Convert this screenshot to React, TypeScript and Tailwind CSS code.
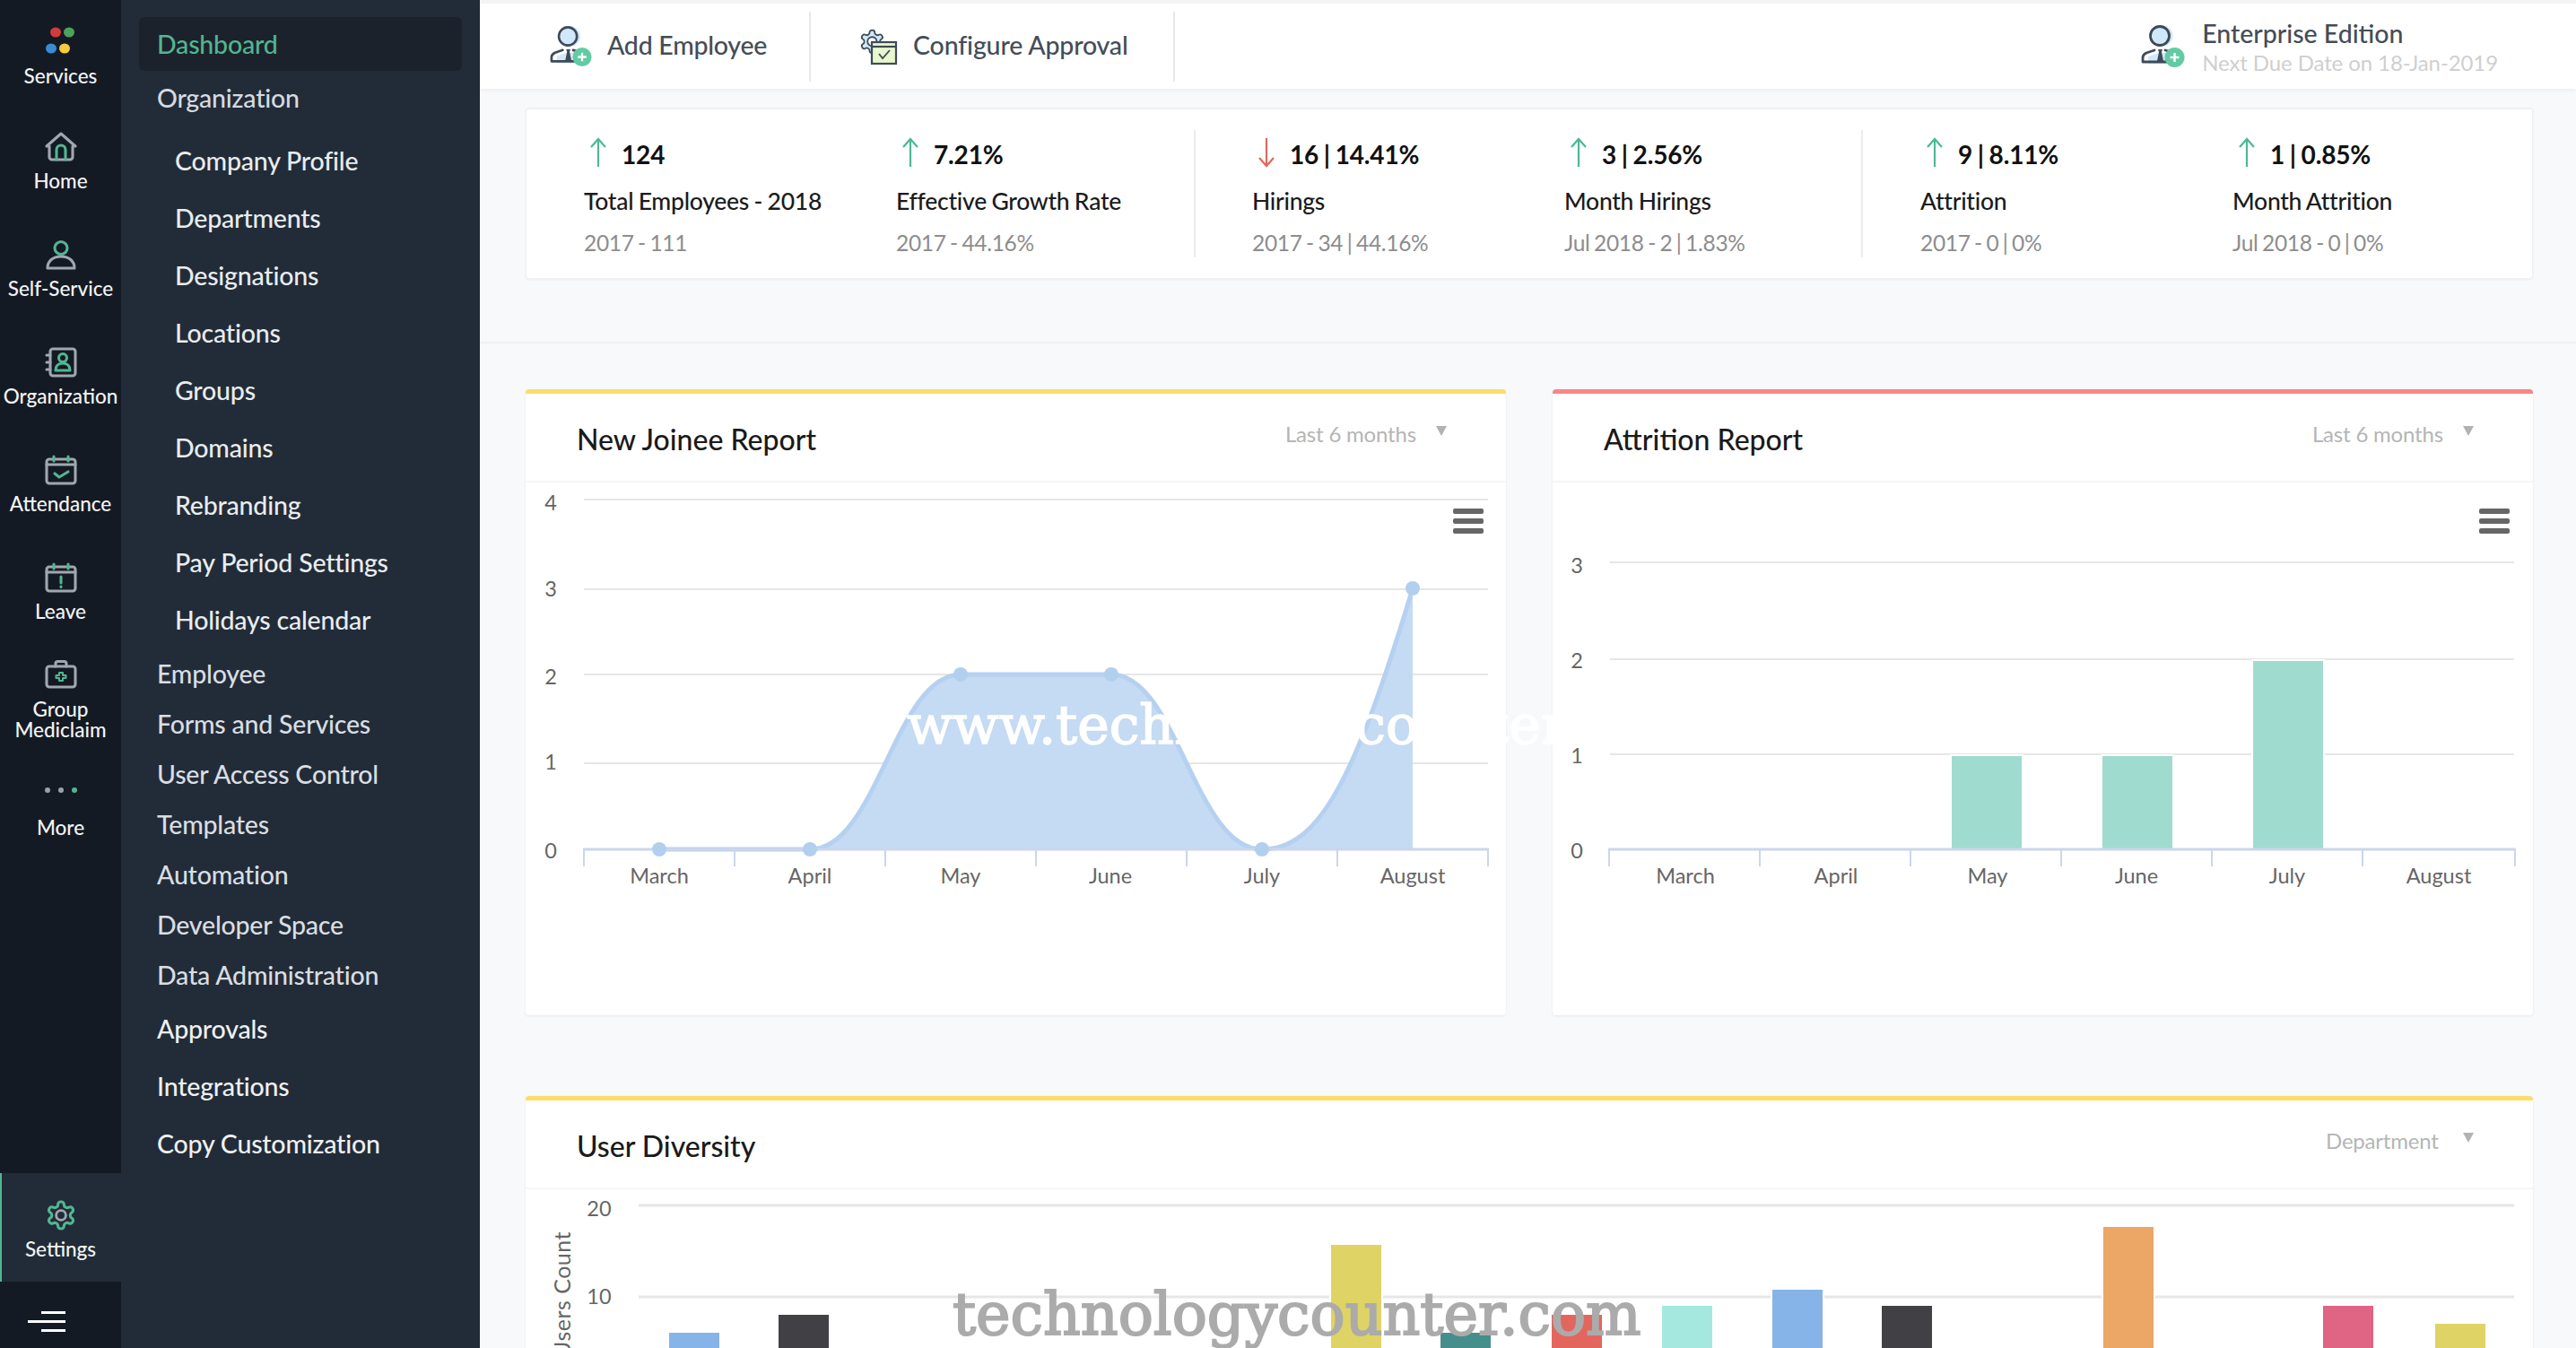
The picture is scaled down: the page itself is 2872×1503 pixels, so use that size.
import React from "react";

const G = "#52b592";
const S = "#a0a7af";

const Gear = "M12.22 2h-.44a2 2 0 0 0-2 2v.18a2 2 0 0 1-1 1.73l-.43.25a2 2 0 0 1-2 0l-.15-.08a2 2 0 0 0-2.73.73l-.22.38a2 2 0 0 0 .73 2.73l.15.1a2 2 0 0 1 1 1.72v.51a2 2 0 0 1-1 1.74l-.15.09a2 2 0 0 0-.73 2.73l.22.38a2 2 0 0 0 2.73.73l.15-.08a2 2 0 0 1 2 0l.43.25a2 2 0 0 1 1 1.73V20a2 2 0 0 0 2 2h.44a2 2 0 0 0 2-2v-.18a2 2 0 0 1 1-1.73l.43-.25a2 2 0 0 1 2 0l.15.08a2 2 0 0 0 2.73-.73l.22-.39a2 2 0 0 0-.73-2.73l-.15-.08a2 2 0 0 1-1-1.74v-.5a2 2 0 0 1 1-1.74l.15-.09a2 2 0 0 0 .73-2.73l-.22-.38a2 2 0 0 0-2.73-.73l-.15.08a2 2 0 0 1-2 0l-.43-.25a2 2 0 0 1-1-1.73V4a2 2 0 0 0-2-2z";

function Ico({ children }: { children: React.ReactNode }) {
  return (
    <svg width="36" height="36" viewBox="0 0 36 36" fill="none" strokeWidth="3.1" strokeLinecap="round" strokeLinejoin="round">
      {children}
    </svg>
  );
}

const railIcons: Record<string, React.ReactNode> = {
  Services: (
    <svg width="36" height="32" viewBox="0 0 36 32">
      <ellipse cx="12" cy="7" rx="6" ry="5.5" fill="#d33a3a" />
      <ellipse cx="27" cy="7" rx="6" ry="5.5" fill="#4ba35a" />
      <ellipse cx="7" cy="25" rx="6" ry="5.5" fill="#3a8ad6" />
      <ellipse cx="22" cy="25" rx="6" ry="5.5" fill="#f4cc3c" />
    </svg>
  ),
  Home: (
    <Ico>
      <path d="M2 17 18 3l16 14h-3v12a3 3 0 0 1-3 3H8a3 3 0 0 1-3-3V17z" stroke={S} />
      <path d="M13 32V21a5 5 0 0 1 10 0v11" stroke={G} />
    </Ico>
  ),
  "Self-Service": (
    <Ico>
      <circle cx="18" cy="10.5" r="7" stroke={G} />
      <path d="M3 33c0-8 6-13 15-13s15 5 15 13z" stroke={S} />
    </Ico>
  ),
  Organization: (
    <Ico>
      <rect x="6" y="3" width="28" height="30" rx="3" stroke={S} />
      <path d="M2 10h4M2 18h4M2 26h4" stroke={S} />
      <circle cx="20" cy="13" r="4.5" stroke={G} />
      <path d="M12 27c0-5 3-8 8-8s8 3 8 8z" stroke={G} />
    </Ico>
  ),
  Attendance: (
    <Ico>
      <rect x="2" y="6" width="32" height="27" rx="3" stroke={S} />
      <path d="M2 12h32" stroke={S} />
      <path d="M10 3v5M26 3v5" stroke={G} />
      <path d="M11 22l5 4 10-6" stroke={G} />
    </Ico>
  ),
  Leave: (
    <Ico>
      <rect x="2" y="6" width="32" height="27" rx="3" stroke={S} />
      <path d="M2 12h32" stroke={S} />
      <path d="M10 3v5M26 3v5" stroke={G} />
      <path d="M18 17v7M18 28v.5" stroke={G} />
    </Ico>
  ),
  Group: (
    <Ico>
      <rect x="2" y="9" width="32" height="23" rx="3" stroke={S} />
      <path d="M12 9V6a2.5 2.5 0 0 1 2.5-2.5h7A2.5 2.5 0 0 1 24 6v3" stroke={S} />
      <path d="M16 16h4v3h3.5v3H20v3h-4v-3h-3.5v-3H16z" stroke={G} strokeWidth="2" />
    </Ico>
  ),
};

function RailItem({ label, ic }: { label: string; ic: React.ReactNode }) {
  return (
    <div className="h-[120px] flex flex-col items-center pt-[21px]">
      <div className="h-[36px] flex items-center justify-center">{ic}</div>
      <div className="mt-[6px] leading-[28px] text-[22.5px] font-medium text-[#f2f4f6] whitespace-nowrap">{label}</div>
    </div>
  );
}

function Rail() {
  return (
    <div className="w-[135px] shrink-0 h-full bg-[#141a24] flex flex-col">
      <div className="h-[125px] flex flex-col items-center pt-[29px]">
        {railIcons.Services}
        <div className="mt-[10px] leading-[28px] text-[22.5px] font-medium text-[#f2f4f6]">Services</div>
      </div>
      <RailItem label="Home" ic={railIcons.Home} />
      <RailItem label="Self-Service" ic={railIcons["Self-Service"]} />
      <RailItem label="Organization" ic={railIcons.Organization} />
      <RailItem label="Attendance" ic={railIcons.Attendance} />
      <RailItem label="Leave" ic={railIcons.Leave} />
      <div className="h-[120px] flex flex-col items-center pt-[9px]">
        {railIcons.Group}
        <div className="mt-[9px] text-center leading-[23px] text-[22.5px] font-medium text-[#f2f4f6]">
          Group
          <br />
          Mediclaim
        </div>
      </div>
      <div className="h-[120px] flex flex-col items-center pt-[33px]">
        <div className="flex gap-[9px]">
          <span className="w-[6px] h-[6px] rounded-full bg-[#9aa1a9]" />
          <span className="w-[6px] h-[6px] rounded-full bg-[#9aa1a9]" />
          <span className="w-[6px] h-[6px] rounded-full bg-[#52b592]" />
        </div>
        <div className="mt-[25px] leading-[28px] text-[22.5px] font-medium text-[#f2f4f6]">More</div>
      </div>
      <div className="mt-auto h-[121px] bg-[#222c38] border-l-[2px] border-[#52b592] flex flex-col items-center pt-[29px] pr-[2px]">
        <svg width="36" height="36" viewBox="0 0 24 24" fill="none" strokeLinecap="round" strokeLinejoin="round">
          <path d={Gear} stroke={G} strokeWidth="2.1" />
          <circle cx="12" cy="12" r="3.6" stroke={S} strokeWidth="1.9" />
        </svg>
        <div className="mt-[6px] leading-[28px] text-[22.5px] font-medium text-[#f2f4f6]">Settings</div>
      </div>
      <div className="h-[74px] pl-[31px] pt-[33px] flex flex-col items-end w-[73px] gap-[7px]">
        <span className="block w-[27px] h-[3px] bg-white" />
        <span className="block w-[42px] h-[3px] bg-white" />
        <span className="block w-[27px] h-[3px] bg-white" />
      </div>
    </div>
  );
}

function Side() {
  const sub = ["Company Profile", "Departments", "Designations", "Locations", "Groups", "Domains", "Rebranding", "Pay Period Settings", "Holidays calendar"];
  const a = ["Employee", "Forms and Services", "User Access Control", "Templates", "Automation", "Developer Space", "Data Administration"];
  const b = ["Approvals", "Integrations", "Copy Customization"];
  return (
    <div className="w-[400px] shrink-0 h-full bg-[#222c38] text-[28.5px] font-medium tracking-[-0.2px] pt-[19px]">
      <div className="mx-[20px] h-[60px] rounded-[6px] bg-[#1b222c] pl-[20px] flex items-center text-[#52b592]">Dashboard</div>
      <div className="h-[60px] pl-[40px] flex items-center text-[#d6dae0]">Organization</div>
      <div className="pt-[8px]">
        {sub.map((s) => (
          <div key={s} className="h-[64px] pl-[60px] flex items-center text-[#e9ecef]">{s}</div>
        ))}
      </div>
      <div>
        {a.map((s) => (
          <div key={s} className="h-[56px] pl-[40px] flex items-center text-[#d9dde2]">{s}</div>
        ))}
      </div>
      <div>
        {b.map((s) => (
          <div key={s} className="h-[64px] pl-[40px] flex items-center text-[#eef0f2]">{s}</div>
        ))}
      </div>
    </div>
  );
}

function PersonAdd({ size = 50 }: { size?: number }) {
  return (
    <svg width={size} height={size} viewBox="0 0 50 50" fill="none">
      <circle cx="24" cy="13" r="11.5" fill="#cfe9fb" />
      <path d="M8 44V36l12-4h12l8 4v8z" fill="#cfe9fb" />
      <circle cx="21" cy="13" r="10.5" stroke="#3f4a57" strokeWidth="2.8" />
      <path d="M2 42v-5c0-3 2-4 4-5l9-3M27 29l7 2M2 42h28" stroke="#3f4a57" strokeWidth="2.8" strokeLinecap="round" strokeLinejoin="round" />
      <path d="M19 28h5l-1 3 2 10h-7l2-10z" fill="#3f4a57" />
      <circle cx="37.5" cy="37" r="11" fill="#62cba4" />
      <path d="M37.5 32v10M32.5 37h10" stroke="#fff" strokeWidth="2.4" />
    </svg>
  );
}

function GearCheck() {
  return (
    <svg width="44" height="42" viewBox="0 0 44 42" fill="none">
      <g transform="scale(1.28)">
        <path d={Gear} fill="#cfe9fb" stroke="#3f4a57" strokeWidth="1.4" />
        <circle cx="12" cy="12" r="4" fill="#fff" stroke="#3f4a57" strokeWidth="1.4" />
      </g>
      <rect x="15" y="16" width="27" height="24" fill="#e6f8cc" stroke="#3f4a57" strokeWidth="2.2" />
      <path d="M15 21h27" stroke="#3f4a57" strokeWidth="2.2" />
      <path d="M23 29l4 5 8-9" stroke="#3f4a57" strokeWidth="1.8" />
    </svg>
  );
}

function TopBar() {
  return (
    <div className="h-[99px] shrink-0 bg-white shadow-[0_2px_4px_rgba(0,0,0,0.05)] flex items-center text-[#454d57] relative z-10 border-t-[4px] border-[#f3f4f5]">
      <div className="pl-[78px] w-[369px] h-[78px] border-r-[2px] border-[#e6e8ec] flex items-center gap-[16px]">
        <PersonAdd size={48} />
        <span className="text-[28.5px] tracking-[-0.25px] font-medium -mt-[2px]">Add Employee</span>
      </div>
      <div className="pl-[53px] w-[406px] h-[78px] border-r-[2px] border-[#e6e8ec] flex items-center gap-[17px]">
        <GearCheck />
        <span className="text-[28.5px] tracking-[-0.15px] font-medium -mt-[2px] whitespace-nowrap">Configure Approval</span>
      </div>
      <div className="ml-auto pr-[87px] flex items-center gap-[18px]">
        <PersonAdd size={50} />
        <div className="pt-[3px]">
          <div className="text-[28.5px] font-medium leading-[32px]">Enterprise Edition</div>
          <div className="text-[24px] tracking-[-0.1px] leading-[30px] mt-[2px] text-[#cfcfcf] whitespace-nowrap">Next Due Date on 18-Jan-2019</div>
        </div>
      </div>
    </div>
  );
}

function Arrow({ down }: { down?: boolean }) {
  const c = down ? "#dc6a5e" : "#4db896";
  return (
    <svg width="20" height="34" viewBox="0 0 20 34" fill="none" stroke={c} strokeWidth="2.2">
      {down ? <path d="M10 1v31M2 23l8 9 8-9" /> : <path d="M10 33V2M2 11l8-9 8 9" />}
    </svg>
  );
}

function Stat({ value, label, sub, down }: { value: string; label: string; sub: string; down?: boolean }) {
  return (
    <div className="w-[348px] shrink-0">
      <div className="flex items-center h-[34px] pl-[6px] gap-[16px]">
        <Arrow down={down} />
        <span className="text-[28px] font-bold text-[#111] [word-spacing:-1px] tracking-[-0.15px] mt-[4px]">{value}</span>
      </div>
      <div className="mt-[20px] text-[26.5px] font-medium tracking-[-0.25px] [word-spacing:-1px] leading-[34px] text-[#1b1b1b]">{label}</div>
      <div className="mt-[14px] text-[24.5px] tracking-[-0.3px] [word-spacing:-1.5px] leading-[32px] text-[#8d8d8d] whitespace-nowrap">{sub}</div>
    </div>
  );
}

function StatsCard() {
  return (
    <div className="mt-[21px] h-[191px] bg-white rounded-[4px] border border-[#eef0f2] border-t-[2px] shadow-[0_1px_3px_rgba(0,0,0,0.05)] flex items-center shrink-0">
      <div className="w-[744px] h-[142px] pl-[64px] flex items-start pt-[8px]">
        <Stat value="124" label="Total Employees - 2018" sub="2017 - 111" />
        <Stat value="7.21%" label="Effective Growth Rate" sub="2017 - 44.16%" />
      </div>
      <div className="w-[744px] h-[142px] pl-[63px] border-l-[2px] border-[#eaecee] flex items-start pt-[8px]">
        <Stat down value="16 | 14.41%" label="Hirings" sub="2017 - 34 | 44.16%" />
        <Stat value="3 | 2.56%" label="Month Hirings" sub="Jul 2018 - 2 | 1.83%" />
      </div>
      <div className="flex-1 h-[142px] pl-[64px] border-l-[2px] border-[#eaecee] flex items-start pt-[8px]">
        <Stat value="9 | 8.11%" label="Attrition" sub="2017 - 0 | 0%" />
        <Stat value="1 | 0.85%" label="Month Attrition" sub="Jul 2018 - 0 | 0%" />
      </div>
    </div>
  );
}

function CardHead({ title, sel, selW }: { title: string; sel: string; selW: string }) {
  return (
    <div className="h-[99px] border-b-[2px] border-[#f5f5f6] flex items-start relative shrink-0">
      <div className="pl-[57px] pt-[30px] text-[32px] font-medium leading-[42px] text-[#1a1a1a]">{title}</div>
      <div className={`ml-auto pt-[29px] flex items-center text-[24px] tracking-[-0.2px] leading-[32px] text-[#b5b5b5] ${selW}`}>
        <span className="whitespace-nowrap">{sel}</span>
        <span className="ml-auto w-0 h-0 -mt-[7px] border-l-[6px] border-r-[6px] border-t-[11px] border-l-transparent border-r-transparent border-t-[#b2b2b2]" />
      </div>
    </div>
  );
}

function Menu({ x }: { x: number }) {
  return (
    <g fill="#666">
      <rect x={x} y="566" width="34" height="6" rx="2" />
      <rect x={x} y="577" width="34" height="6" rx="2" />
      <rect x={x} y="588" width="34" height="6" rx="2" />
    </g>
  );
}

const months = ["March", "April", "May", "June", "July", "August"];

function ChartText({ x, y, t }: { x: number; y: number; t: string }) {
  return (
    <text x={x} y={y} textAnchor="middle" dominantBaseline="central" fill="#666" fontSize="23.5" fontFamily="Lato, sans-serif">
      {t}
    </text>
  );
}

function JoineeCard() {
  const pts: [number, number][] = [[735, 946], [903, 946], [1071, 751], [1239, 751], [1407, 946], [1575, 655]];
  const line = "M735 946 L903 946 C978 946 998 751 1071 751 L1239 751 C1312 751 1332 946 1407 946 C1470 946 1510 870 1575 655";
  const tk = [651, 819, 987, 1155, 1323, 1491, 1659];
  return (
    <div className="h-[698px] bg-white rounded-[4px] border-t-[5px] border-[#fddc6c] shadow-[0_1px_3px_rgba(0,0,0,0.08)] flex flex-col">
      <CardHead title="New Joinee Report" sel="Last 6 months" selW="w-[246px] pr-[66px]" />
      <svg width="1093" height="594" viewBox="586 537 1093 594" className="block">
        {[556, 656, 751, 850].map((y) => (
          <line key={y} x1="651" x2="1659" y1={y} y2={y} stroke="#e6e6e6" strokeWidth="2" />
        ))}
        <path d={line + " L1575 946 Z"} fill="#c5daf3" />
        <path d={line} fill="none" stroke="#b6d1f0" strokeWidth="5" />
        <line x1="650" x2="1660" y1="946" y2="946" stroke="#ccd6eb" strokeWidth="3" />
        {tk.map((x) => (
          <line key={x} x1={x} x2={x} y1="946" y2="965" stroke="#ccd6eb" strokeWidth="2" />
        ))}
        {pts.map(([x, y]) => (
          <circle key={x} cx={x} cy={y} r="8" fill="#b3cfee" />
        ))}
        {["4", "3", "2", "1", "0"].map((t, i) => (
          <ChartText key={t} x={614} y={[559, 655, 753, 848, 947][i]} t={t} />
        ))}
        {months.map((m, i) => (
          <ChartText key={m} x={[735, 903, 1071, 1238, 1407, 1575][i]} y={975} t={m} />
        ))}
        <Menu x={1620} />
      </svg>
    </div>
  );
}

function AttritionCard() {
  const tk = [1794, 1962, 2130, 2298, 2466, 2634, 2804];
  const bars: [number, number][] = [[2175, 841], [2343, 841], [2511, 735]];
  return (
    <div className="h-[698px] bg-white rounded-[4px] border-t-[5px] border-[#f98686] shadow-[0_1px_3px_rgba(0,0,0,0.08)] flex flex-col">
      <CardHead title="Attrition Report" sel="Last 6 months" selW="w-[246px] pr-[66px]" />
      <svg width="1093" height="594" viewBox="1731 537 1093 594" className="block">
        {[626, 734, 840].map((y) => (
          <line key={y} x1="1795" x2="2803" y1={y} y2={y} stroke="#e6e6e6" strokeWidth="2" />
        ))}
        {bars.map(([x, y]) => (
          <rect key={x} x={x} y={y} width="80" height={946 - y} fill="#a0dbcf" stroke="#fff" strokeWidth="2" />
        ))}
        <line x1="1793" x2="2805" y1="946" y2="946" stroke="#ccd6eb" strokeWidth="3" />
        {tk.map((x) => (
          <line key={x} x1={x} x2={x} y1="946" y2="965" stroke="#ccd6eb" strokeWidth="2" />
        ))}
        {["3", "2", "1", "0"].map((t, i) => (
          <ChartText key={t} x={1758} y={[629, 735, 841, 947][i]} t={t} />
        ))}
        {months.map((m, i) => (
          <ChartText key={m} x={[1879, 2047, 2216, 2382, 2550, 2719][i]} y={975} t={m} />
        ))}
        <Menu x={2764} />
      </svg>
    </div>
  );
}

function DiversityCard() {
  const bars: [number, number, string][] = [
    [745, 1485, "#86b4e8"],
    [867, 1465, "#414045"],
    [1483, 1387, "#e0d365"],
    [1605, 1485, "#468e8c"],
    [1729, 1465, "#e2665e"],
    [1852, 1455, "#a5e8e0"],
    [1975, 1437, "#86b4e8"],
    [2097, 1455, "#414045"],
    [2344, 1367, "#eca666"],
    [2589, 1455, "#e06483"],
    [2714, 1475, "#e0d365"],
  ];
  return (
    <div className="mt-[90px] h-[400px] shrink-0 bg-white rounded-[4px] border-t-[5px] border-[#fddc6c] shadow-[0_1px_3px_rgba(0,0,0,0.08)] flex flex-col">
      <CardHead title="User Diversity" sel="Department" selW="w-[231px] pr-[66px]" />
      <svg width="2238" height="180" viewBox="586 1326 2238 180" className="block">
        {[1344, 1446].map((y) => (
          <line key={y} x1="712" x2="2803" y1={y} y2={y} stroke="#e6e6e6" strokeWidth="3" />
        ))}
        {bars.map(([x, y, c]) => (
          <rect key={x} x={x} y={y} width="58" height={1510 - y} fill={c} stroke="#fff" strokeWidth="2" />
        ))}
        <ChartText x={668} y={1347} t="20" />
        <ChartText x={668} y={1445} t="10" />
        <text
          transform="translate(626 1373) rotate(-90)"
          textAnchor="end"
          dominantBaseline="central"
          fill="#666"
          fontSize="25"
          letterSpacing="0.5"
          fontFamily="Lato, sans-serif"
        >
          Users Count
        </text>
      </svg>
    </div>
  );
}

export default function App() {
  return (
    <div className="relative w-[2872px] h-[1503px] overflow-hidden flex bg-[#f8f9fb] font-['Lato',sans-serif]">
      <Rail />
      <Side />
      <div className="flex-1 min-w-0 flex flex-col">
        <TopBar />
        <div className="pl-[51px] pr-[48px] flex flex-col">
          <StatsCard />
        </div>
        <div className="mt-[70px] h-[2px] shrink-0 bg-[#eef0f2]" />
        <div className="pl-[51px] pr-[48px] flex flex-col">
          <div className="mt-[51px] grid grid-cols-2 gap-[52px]">
            <JoineeCard />
            <AttritionCard />
          </div>
          <DiversityCard />
        </div>
      </div>
      <div className="absolute left-[1011px] top-[770px] text-[60px] leading-[76px] text-white font-['DejaVu_Serif',serif] [-webkit-text-stroke:1.5px_#ffffff] whitespace-nowrap pointer-events-none">
        www.technologycounter.com
      </div>
      <div className="absolute left-[1062px] top-[1428px] text-[65px] leading-[76px] text-[#ababab] font-['DejaVu_Serif',serif] [-webkit-text-stroke:2px_#ababab] whitespace-nowrap pointer-events-none">
        technologycounter.com
      </div>
    </div>
  );
}
